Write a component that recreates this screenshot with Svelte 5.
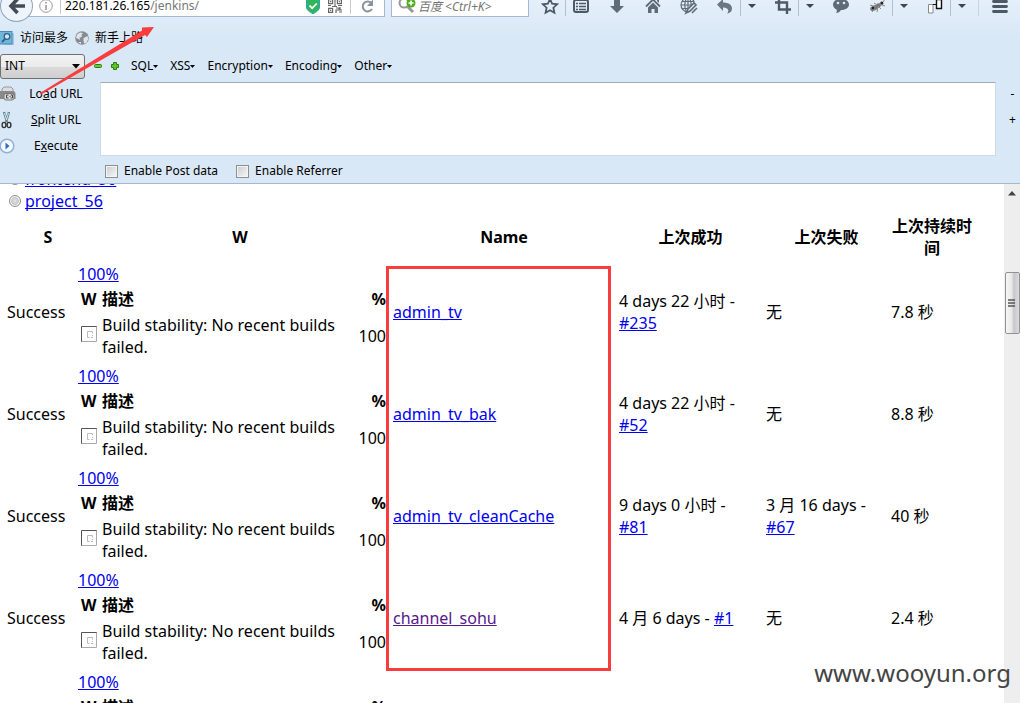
<script>
  const jobs = [
    { name: 'admin_tv', ok: '4 days 22 小时', okBuild: '#235', fail: null, failBuild: null, time: '7.8 秒' },
    { name: 'admin_tv_bak', ok: '4 days 22 小时', okBuild: '#52', fail: null, failBuild: null, time: '8.8 秒' },
    { name: 'admin_tv_cleanCache', ok: '9 days 0 小时', okBuild: '#81', fail: '3 月 16 days', failBuild: '#67', time: '40 秒' },
    { name: 'channel_sohu', visited: true, ok: '4 月 6 days', okBuild: '#1', fail: null, failBuild: null, time: '2.4 秒' },
    { name: '', ok: '', okBuild: '', fail: '', failBuild: null, time: '' }
  ];
  const menus = ['SQL', 'XSS', 'Encryption', 'Encoding', 'Other'];
</script>

{#snippet caret(label)}
  <button class="caret" aria-label={label}>
    <svg width="8" height="5" viewBox="0 0 8 5"><path d="M0 0h8L4 4z" fill="#3b4650" /></svg>
  </button>
{/snippet}

<div class="window">
  <header class="chrome">
    <div class="nav">
      <button class="back" aria-label="Back">
        <svg width="18" height="18" viewBox="0 0 18 18"><path d="M9.5 2 3 9l6.500 7M3.500 9H17" fill="none" stroke="#434c56" stroke-width="3.600" /></svg>
      </button>
      <div class="url">
        <svg width="14" height="14" viewBox="0 0 14 14" fill="none" stroke="#999"><circle cx="7" cy="7" r="6.300" /><path d="M7 6v5M7 3v1.600" stroke-width="1.600" /></svg>
        <i class="rule"></i>
        <div class="address"><b>220.181.26.165</b>/jenkins/</div>
        <svg width="14" height="16" viewBox="0 0 14 16"><path d="M7 .5 13.500 2v7c0 3-3 5-6.500 6.700C3.500 14 .5 12 .5 9V2z" fill="#31b55c" stroke="#2aa5b5" /><path d="m3.500 7.500 2.700 2.700 4.500-4.700" fill="none" stroke="#fff" stroke-width="1.800" /></svg>
        <svg class="qr" width="14" height="14" viewBox="0 0 14 14" fill="none" stroke="#666" stroke-width="1.200"><path d="M.6.6h4v4h-4zM9.400.6h4v4h-4zM.6 9.400h4v4h-4z" /><path d="M2 2.600h1.300M10.800 2.600H12M2 11.400h1.300M7 0v3M6 4h2M7 5v2M0 6.500h3M4 7.500h5M10 6.500h4M8 9h3v2H8v3M12 8v3h2M11 13h3" /></svg>
        <i class="rule"></i>
        <button class="reload" aria-label="Reload">
          <svg width="14" height="14" viewBox="0 0 14 14"><path d="M10.500 4.200A5 5 0 1 0 11 10" fill="none" stroke="#8b939b" stroke-width="2" /><path d="M12 .5V7H6z" fill="#8b939b" /></svg>
        </button>
      </div>
      <div class="search">
        <svg width="18" height="18" viewBox="0 0 18 18"><circle cx="6" cy="6" r="4.500" fill="none" stroke="#999" stroke-width="2" /><path d="m9 9 6 6" stroke="#999" stroke-width="3" /><circle cx="13" cy="6" r="4.500" fill="#4fae1b" /><path d="M13 3.500v5M10.500 6h5" stroke="#fff" stroke-width="1.600" /></svg>
        <input aria-label="Search" placeholder="百度 <Ctrl+K>" />
      </div>
      <div class="tools">
        <button aria-label="Bookmark"><svg width="18" height="18" viewBox="0 0 18 18"><path d="m9 2 2.100 4.700 5 .6-3.700 3.400 1 5L9 13.200l-4.400 2.500 1-5L1.900 7.300l5-.6z" fill="none" stroke="#4e5964" stroke-width="1.800" /></svg></button>
        <button class="split" aria-label="Bookmarks list"><svg width="16" height="16" viewBox="0 0 16 16"><rect x="1" y="2" width="14" height="12" rx="2" fill="none" stroke="#4e5964" stroke-width="2" /><path d="M3 5.500h2M3 8.500h2M3 11.500h2M6 5.500h7M6 8.500h7M6 11.500h7" stroke="#4e5964" stroke-width="1.500" /></svg></button>
        <button aria-label="Downloads"><svg width="16" height="16" viewBox="0 0 16 16"><path d="M5 1h6v7h4l-7 7-7-7h4z" fill="#5f6b77" /></svg></button>
        <button aria-label="Home"><svg width="16" height="16" viewBox="0 0 16 16"><path d="m1 8.500 7-7 7 7" fill="none" stroke="#5f6b77" stroke-width="1.800" /><path d="m8 4.500 5 5V15H9.500v-4h-3v4H3V9.500zM12 1h2v4l-2-2z" fill="#5f6b77" /></svg></button>
        <button aria-label="Web tools"><svg width="18" height="18" viewBox="0 0 18 18" fill="none" stroke="#5f6b77" stroke-width="1.200"><circle cx="8" cy="8" r="7" /><ellipse cx="8" cy="8" rx="3.200" ry="7" /><path d="M1 8h14M8 1v14M2 4.500h12M2 11.500h12" /><path d="m8 15 9-9" stroke="#e2ecf7" stroke-width="5" /><path d="m6 16 2-4 6-6 2 2-6 6zM12 16l5-5" stroke-width="1.600" /></svg></button>
        <button aria-label="Undo"><svg width="16" height="16" viewBox="0 0 16 16"><path d="M0 6.500 6 1v3.500c5 0 9 2 9 6 0 3-2 4.500-5 5 2.500-2.500 1.500-6-4-6V13z" fill="#6b7783" /></svg></button>
        {@render caret('Undo options')}
        <button aria-label="Capture"><svg width="16" height="16" viewBox="0 0 16 16"><path d="M4 0v11.500h12M0 4.500h12V16" fill="none" stroke="#4e5964" stroke-width="2.400" /></svg></button>
        {@render caret('Capture options')}
        <button aria-label="Chat"><svg width="18" height="16" viewBox="0 0 18 16"><path d="M9 1c5 0 8 2.500 8 5.500S14 12 9 12c-1 2-3 3-5 3 .8-1 1-2.500.6-3.500C2.500 10.500 1 9 1 6.500 1 3.500 4 1 9 1z" fill="#5f6b77" /><circle cx="6" cy="5" r="1.300" fill="#dce9f7" /><circle cx="12" cy="5" r="1.300" fill="#dce9f7" /></svg></button>
        <button aria-label="Debug"><svg width="18" height="16" viewBox="0 0 18 16"><g fill="#777"><ellipse cx="6" cy="10" rx="4" ry="2.600" transform="rotate(-25 6 10)" /><circle cx="10.500" cy="7.500" r="2.300" /><circle cx="13.500" cy="5.500" r="1.900" /></g><path d="M2 7 8 9M4 14l3-4M9 14l1-5M13 11l-3-3M17 8l-5-2M15 4l2-3M6 5l3 2" stroke="#8a8a8a" fill="none" /><circle cx="14" cy="5" r="1.200" fill="#222" /><circle cx="5" cy="10" r="1.200" fill="#222" /></svg></button>
        {@render caret('Debug options')}
        <button aria-label="Pages"><svg width="16" height="18" viewBox="0 0 16 18"><path d="M1.500 7.500h4.500v8.500H1.500z" fill="#fff" stroke="#888" /><path d="M6 7.500h4" stroke="#111" /><path d="M9.500 2.500h5v9h-5z" fill="#fff" stroke="#111" stroke-width="1.400" /></svg></button>
        {@render caret('Pages options')}
        <button class="menu" aria-label="Menu"><svg width="16" height="14" viewBox="0 0 16 14"><path d="M1.500 2.500h13M1.500 7.500h13M1.500 12.500h13" stroke="#4e5964" stroke-width="2.800" stroke-linecap="round" /></svg></button>
      </div>
    </div>

    <nav class="bookmarks">
      <a href="#most">
        <svg width="14" height="14" viewBox="0 0 14 14"><rect x="4" y="2" width="10" height="12" rx="1" fill="#9cc8e4" /><rect x="-1" y=".5" width="13" height="12.500" fill="#74b4dc" stroke="#4989b5" /><circle cx="7" cy="5.500" r="2.800" fill="#cde8f7" stroke="#2d6288" stroke-width="1.300" /><path d="m5 8-3 3" stroke="#2d6288" stroke-width="1.800" /></svg>
        访问最多
      </a>
      <a href="#start">
        <svg width="14" height="14" viewBox="0 0 14 14"><circle cx="7" cy="7" r="6.800" fill="#858b91" /><path d="M2 3.500 5 1.500l3 .5-1.500 2L7 6 4.500 6.500 5 9 3.500 8 1 7zM8.500 7l4-2 .8 3-2 4-2.300.5-.5-3zM3 11l3 0 0 2z" fill="#dfe5ea" /></svg>
        新手上路
      </a>
    </nav>

    <div class="menus">
      <div class="picker">
        <select aria-label="Type"><option>INT</option></select>
        <svg width="8" height="5" viewBox="0 0 8 5"><path d="M0 0h8L4 4.500z" fill="#000" /></svg>
      </div>
      <button class="sign" aria-label="Remove"><svg width="10" height="10" viewBox="0 0 10 10"><rect x="1.500" y="3.500" width="7" height="3" rx="1" fill="#6c3" stroke="#2b7d0a" /></svg></button>
      <button class="sign" aria-label="Add"><svg width="10" height="10" viewBox="0 0 10 10"><path d="M3.500 1.500h3v2h2v3h-2v2h-3v-2h-2v-3h2z" fill="#5cc52a" stroke="#2b7d0a" /></svg></button>
      {#each menus as m}
        <button class="drop">{m}<svg width="5" height="3" viewBox="0 0 5 3"><path d="M0 0h5L2.500 3z" /></svg></button>
      {/each}
    </div>

    <div class="hackbar">
      <div class="actions">
        <button>
          <svg width="16" height="16" viewBox="0 0 16 16"><path d="M2 6V3l2-2h7l2 2v3" fill="#ddd" stroke="#999" /><path d="M0 5h14l1.500 2v6H0z" fill="#8a8a8a" /><rect x="4" y="7.500" width="10" height="6.500" rx="2" fill="#ddd" stroke="#777" /><path d="M8.500 9H6.500v3h2M9.500 10.500h1M10.500 9h2v3h-2" fill="none" stroke="#444" /></svg>
          <span>Lo<u>a</u>d URL</span>
        </button>
        <button>
          <svg width="16" height="18" viewBox="0 0 16 18"><path d="m4 1 3 10M9 1 6 11" stroke="#5b8791" stroke-width="2.400" /><path d="m4.500 2 2 7M8.500 2l-2 7" stroke="#d5e2e6" /><ellipse cx="4" cy="14" rx="1.900" ry="2.600" fill="none" stroke="#333" stroke-width="1.400" /><ellipse cx="9" cy="14" rx="1.900" ry="2.600" fill="none" stroke="#333" stroke-width="1.400" /></svg>
          <span><u>S</u>plit URL</span>
        </button>
        <button>
          <svg width="16" height="16" viewBox="0 0 16 16"><circle cx="7" cy="8" r="6.800" fill="#f5f9fd" stroke="#8fb0d8" stroke-width="1.500" /><path d="m5.500 4.500 4 3.500-4 3.500z" fill="#2b6fc0" /></svg>
          <span>E<u>x</u>ecute</span>
        </button>
      </div>
      <textarea aria-label="URL"></textarea>
      <div class="resize"><button>-</button><button>+</button></div>
    </div>

    <div class="options">
      <label><input type="checkbox" />Enable Post data</label>
      <label><input type="checkbox" />Enable Referrer</label>
    </div>
  </header>

  <div class="view">
    <main>
      <div class="projects">
        <div class="project"><input type="radio" name="project" aria-label="frontend_56" /><a href="#frontend">frontend_56</a></div>
        <div class="project"><input type="radio" name="project" aria-label="project_56" /><a href="#project">project_56</a></div>
      </div>
      <table class="jobs">
        <colgroup><col class="c-s" /><col class="c-w" /><col /><col class="c-ok" /><col class="c-fail" /><col class="c-time" /></colgroup>
        <thead>
          <tr><th class="indent">S</th><th class="indent">W</th><th>Name</th><th>上次成功</th><th>上次失败</th><th>上次持续时间</th></tr>
        </thead>
        <tbody>
          {#each jobs as job}
            <tr>
              <td>{job.name ? 'Success' : ''}</td>
              <td class="weather">
                <a href="#health">100%</a>
                <table class="health">
                  <colgroup><col class="h-w" /><col /><col class="h-p" /></colgroup>
                  <thead><tr><th>W</th><th>描述</th><th class="num">%</th></tr></thead>
                  <tbody>
                    <tr>
                      <td class="icon"><svg width="16" height="16" viewBox="0 0 16 16"><path d="M15.500 0v15.500H0" fill="none" stroke="#aaa" /><path d="M.5 15.500V.5h15" fill="none" stroke="#555" /><path d="M11.500 5.500h-5v6h2M11.500 5.500v2M10 11.500h2M11.500 9v1" fill="none" stroke="#bbb" /></svg></td>
                      <td>Build stability: No recent builds failed.</td>
                      <td class="num">100</td>
                    </tr>
                  </tbody>
                </table>
              </td>
              <td><a href="#job" class:visited={job.visited}>{job.name}</a></td>
              <td>{#if job.ok}{job.ok} - <a href="#build">{job.okBuild}</a>{/if}</td>
              <td>{#if job.fail}{job.fail} - <a href="#build">{job.failBuild}</a>{:else if job.name}无{/if}</td>
              <td>{job.time}</td>
            </tr>
          {/each}
        </tbody>
      </table>
      <div class="frame"></div>
    </main>
    <div class="scrollbar">
      <svg width="8" height="5" viewBox="0 0 8 5"><path d="M0 4.500h8L4 0z" fill="#444" /></svg>
      <div class="thumb"><svg width="8" height="9" viewBox="0 0 8 9"><path d="M0 1h7M0 4h7M0 7h7" stroke="#555" stroke-width="1.500" /></svg></div>
    </div>
  </div>

  <svg class="arrow" width="160" height="110" viewBox="0 0 160 110"><path d="M40 93 142 30.500V27.500L154 27l-7 10-2-2L41 94.500z" fill="#f93c3c" /></svg>
  <div class="watermark">www.wooyun.org</div>
</div>

<style>
  :global(body) { margin: 0; }
  .window {
    position: relative;
    display: flex;
    flex-direction: column;
    height: 100vh;
    overflow: hidden;
    font: 16px/22px 'Noto Sans', 'Noto Sans CJK SC', sans-serif;
    color: #000;
    background: #fff;
  }
  button { font: inherit; color: inherit; padding: 0; border: 0; background: none; }
  svg { display: block; flex: none; }
  .chrome {
    flex: none;
    font-size: 12px;
    line-height: 18px;
    background: linear-gradient(#e5effa, #d9e8f7 36px);
    border-bottom: 1px solid #a5b8cf;
  }
  .nav { display: flex; align-items: center; height: 36px; margin-top: -12px; }
  .back {
    position: relative;
    z-index: 1;
    display: grid;
    place-items: center;
    width: 33px;
    height: 32px;
    border: 1px solid #8fa4bc;
    border-radius: 50%;
    background: #eef4fb;
    box-sizing: border-box;
  }
  .url, .search {
    display: flex;
    align-items: center;
    height: 22px;
    border: 1px solid #a5b8d0;
    background: #fff;
    box-sizing: border-box;
  }
  .url { flex: 1; min-width: 0; margin-left: -8px; padding: 0 9px 0 13px; }
  .rule { width: 1px; height: 16px; margin: 0 8px; background: #c5c9ce; }
  .url .rule:nth-of-type(1) { margin: 0 4px 0 7px; }
  .address { flex: 1; color: #777; }
  .address b { font-weight: 400; color: #000; }
  .qr { margin-left: 8px; }
  .reload { margin-left: 2px; }
  .search { width: 138px; margin: 0 6px; padding-left: 6px; }
  .search input {
    flex: 1;
    min-width: 0;
    margin-left: 2px;
    padding: 0;
    border: 0;
    outline: 0;
    background: none;
    font: italic 12px 'Noto Sans', 'Noto Sans CJK SC', sans-serif;
  }
  .search input::placeholder { color: #757575; }
  .tools { display: flex; align-items: center; }
  .tools button { display: grid; place-items: center; width: 30px; height: 20px; margin-right: 6px; }
  .tools button:has(+ .caret), .tools button:first-child { margin-right: 0; }
  .tools .split { width: 31px; border-left: 1px solid #b3bfcc; }
  .tools .caret { width: 22px; border-left: 1px solid #b3bfcc; box-sizing: border-box; }
  .tools .menu { width: 42px; margin: 0; border-left: 1px solid #c8d4e0; }
  .bookmarks { display: flex; align-items: center; gap: 7px; height: 28px; }
  .bookmarks a { display: flex; align-items: center; gap: 6px; color: #000; text-decoration: none; }
  .menus { display: flex; align-items: center; height: 28px; }
  .picker { position: relative; width: 85px; margin-right: 8px; }
  .picker select {
    display: block;
    appearance: none;
    width: 100%;
    height: 25px;
    padding: 0 4px;
    border: 1px solid #707070;
    border-radius: 3px;
    background: linear-gradient(#f2f2f2, #ebebeb 50%, #dadada 50%, #cfcfcf);
    font: inherit;
    color: #000;
  }
  .picker svg { position: absolute; right: 5px; top: 10px; pointer-events: none; }
  .sign { width: 10px; margin-right: 7px; }
  .drop { display: flex; align-items: center; margin-right: 12px; }
  .sign + .drop { margin-left: 4px; }
  .hackbar { display: flex; padding-top: 1px; }
  .actions { width: 100px; }
  .actions button { display: flex; align-items: center; width: 100%; height: 26px; padding-right: 4px; }
  .actions span { flex: 1; }
  textarea {
    flex: 1;
    min-width: 0;
    height: 74px;
    margin-top: 1px;
    padding: 4px;
    border: 1px solid #cfd9e4;
    border-top-color: #a2aab4;
    resize: none;
    background: #fff;
    box-sizing: border-box;
  }
  .resize { width: 24px; }
  .resize button { display: block; width: 100%; height: 26px; padding-left: 9px; }
  .options { display: flex; align-items: center; gap: 18px; height: 24px; padding-left: 105px; }
  .options label { display: flex; align-items: center; gap: 6px; }
  .options input {
    appearance: none;
    width: 13px;
    height: 13px;
    margin: 0;
    border: 1px solid #8e8f8f;
    background: linear-gradient(135deg, #c9ccd0, #f8f8f8);
    box-shadow: inset 0 0 0 1px #f4f4f4;
  }
  .view { flex: 1; display: flex; min-height: 0; }
  main { position: relative; flex: 1; min-width: 0; overflow: hidden; }
  a { color: #00e; text-decoration-skip-ink: none; }
  .visited { color: #551a8b; }
  .projects { margin-top: -16px; padding-left: 9px; }
  .project { display: flex; align-items: center; gap: 4px; height: 22px; }
  .project input {
    appearance: none;
    width: 12px;
    height: 12px;
    margin: 0;
    border: 1px solid #8e8f8f;
    border-radius: 50%;
    background: radial-gradient(#e4e4e4, #c8c8c8 50%, #f4f4f4 60%);
  }
  table { border-spacing: 0; table-layout: fixed; }
  th, td { padding: 0; text-align: left; }
  .jobs { width: calc(100% - 36px); margin-left: 7px; }
  .jobs > thead th { height: 50px; text-align: center; }
  .jobs .indent { padding-left: 12px; }
  .jobs > tbody > tr > td { height: 100px; padding: 0 18px 2px 0; }
  .jobs > tbody > tr > td:nth-child(n + 3) { padding-left: 2px; }
  .jobs > tbody > tr > td:first-child { padding-right: 0; }
  .jobs > tbody > tr > .weather { padding: 1px 5px 0 1px; height: 101px; vertical-align: top; }
  .c-s { width: 70px; }
  .c-w { width: 314px; }
  .c-ok { width: 147px; }
  .c-fail { width: 125px; }
  .c-time { width: 86px; }
  .health { width: 100%; margin-top: 3px; padding-left: 3px; }
  .health td { padding-top: 4px; }
  .health .icon { padding-bottom: 4px; }
  .h-w { width: 21px; }
  .h-p { width: 40px; }
  .health .num { text-align: right; }
  .frame { position: absolute; left: 386px; top: 82px; width: 225px; height: 405px; border: 3px solid #f93c3c; box-sizing: border-box; }
  .scrollbar { width: 14px; padding: 7px 1px 0; background: #eee; display: flex; flex-direction: column; align-items: center; }
  .thumb {
    display: grid;
    place-items: center;
    width: 13px;
    height: 60px;
    margin-top: 76px;
    border: 1px solid #929292;
    border-radius: 2px;
    background: linear-gradient(90deg, #f6f6f6, #e8e8ea 45%, #c6c6cb 60%, #dcdce0);
  }
  .arrow { position: absolute; left: 0; top: 0; pointer-events: none; }
  .watermark { position: absolute; right: 9px; bottom: 13px; font-size: 24px; line-height: 34px; color: #444; }
</style>
